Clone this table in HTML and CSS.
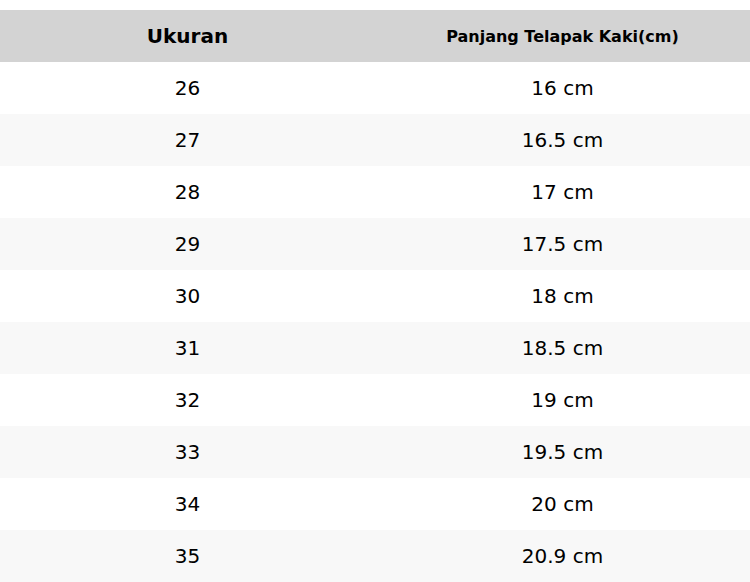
FILE: index.html
```html
<!DOCTYPE html>
<html>
<head>
<meta charset="utf-8">
<link rel="stylesheet" href="styles.css">
</head>
<body>
<table class="size-table">
  <thead>
    <tr><th class="h-main">Ukuran</th><th class="h-sub">Panjang Telapak Kaki(cm)</th></tr>
  </thead>
  <tbody>
    <tr><td>26</td><td>16 cm</td></tr>
    <tr><td>27</td><td>16.5 cm</td></tr>
    <tr><td>28</td><td>17 cm</td></tr>
    <tr><td>29</td><td>17.5 cm</td></tr>
    <tr><td>30</td><td>18 cm</td></tr>
    <tr><td>31</td><td>18.5 cm</td></tr>
    <tr><td>32</td><td>19 cm</td></tr>
    <tr><td>33</td><td>19.5 cm</td></tr>
    <tr><td>34</td><td>20 cm</td></tr>
    <tr><td>35</td><td>20.9 cm</td></tr>
  </tbody>
</table>
</body>
</html>
```
FILE: styles.css
```css
html, body {
  margin: 0;
  padding: 0;
  background: #ffffff;
  font-family: "DejaVu Sans", sans-serif;
  color: #000;
}
.size-table {
  margin-top: 10px;
  width: 750px;
  border-collapse: collapse;
  table-layout: fixed;
}
.size-table th,
.size-table td {
  width: 50%;
  height: 52px;
  padding: 0;
  text-align: center;
  vertical-align: middle;
}
.size-table thead tr {
  background: #d3d3d3;
}
.h-main {
  font-size: 20px;
  font-weight: bold;
}
.h-sub {
  font-size: 16px;
  font-weight: bold;
}
.size-table td {
  font-size: 20px;
}
.size-table tbody tr:nth-child(even) {
  background: #f8f8f8;
}
```
